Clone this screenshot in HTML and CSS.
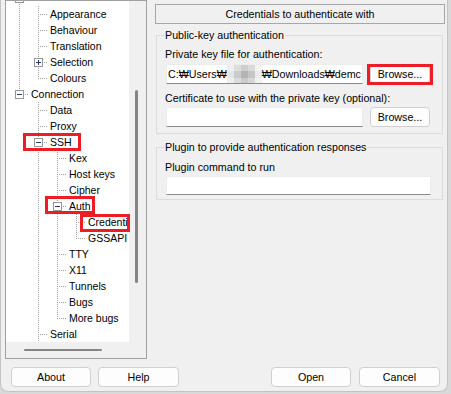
FILE: index.html
```html
<!DOCTYPE html>
<html lang="en">
<head>
    <meta charset="UTF-8">
    <title>PuTTY Configuration - Credentials</title>
    <link rel="stylesheet" href="styles.css">
</head>
<body>
    <div class="window">
        <div class="main">
            <div class="tree-panel">
                <div class="tree-view">
                    <ul class="tree">
                        <!-- "Window" row, scrolled out of view: only its lines show -->
                        <li class="row"><span class="cell t"><span class="exp"></span></span></li>
                        <li class="row"><span class="cell v"></span><span class="cell t"></span><span class="label">Appearance</span></li>
                        <li class="row"><span class="cell v"></span><span class="cell t"></span><span class="label">Behaviour</span></li>
                        <li class="row"><span class="cell v"></span><span class="cell t"></span><span class="label">Translation</span></li>
                        <li class="row"><span class="cell v"></span><span class="cell t"><span class="exp plus"></span></span><span class="label">Selection</span></li>
                        <li class="row"><span class="cell v"></span><span class="cell l"></span><span class="label">Colours</span></li>
                        <li class="row"><span class="cell l"><span class="exp"></span></span><span class="label">Connection</span></li>
                        <li class="row"><span class="cell"></span><span class="cell t"></span><span class="label">Data</span></li>
                        <li class="row"><span class="cell"></span><span class="cell t"></span><span class="label">Proxy</span></li>
                        <li class="row"><span class="cell"></span><span class="cell t"><span class="exp"></span></span><span class="label">SSH</span></li>
                        <li class="row"><span class="cell"></span><span class="cell v"></span><span class="cell t"></span><span class="label">Kex</span></li>
                        <li class="row"><span class="cell"></span><span class="cell v"></span><span class="cell t"></span><span class="label">Host keys</span></li>
                        <li class="row"><span class="cell"></span><span class="cell v"></span><span class="cell t"></span><span class="label">Cipher</span></li>
                        <li class="row"><span class="cell"></span><span class="cell v"></span><span class="cell t"><span class="exp"></span></span><span class="label">Auth</span></li>
                        <li class="row"><span class="cell"></span><span class="cell v"></span><span class="cell v"></span><span class="cell t"></span><span class="label">Credenti</span></li>
                        <li class="row"><span class="cell"></span><span class="cell v"></span><span class="cell v"></span><span class="cell l"></span><span class="label">GSSAPI</span></li>
                        <li class="row"><span class="cell"></span><span class="cell v"></span><span class="cell t"></span><span class="label">TTY</span></li>
                        <li class="row"><span class="cell"></span><span class="cell v"></span><span class="cell t"></span><span class="label">X11</span></li>
                        <li class="row"><span class="cell"></span><span class="cell v"></span><span class="cell t"></span><span class="label">Tunnels</span></li>
                        <li class="row"><span class="cell"></span><span class="cell v"></span><span class="cell t"></span><span class="label">Bugs</span></li>
                        <li class="row"><span class="cell"></span><span class="cell v"></span><span class="cell l"></span><span class="label">More bugs</span></li>
                        <li class="row"><span class="cell"></span><span class="cell t"></span><span class="label">Serial</span></li>
                    </ul>
                </div>
                <div class="vscroll"><div class="thumb-v"></div></div>
                <div class="hscroll"><div class="thumb-h"></div></div>
                <div class="corner"></div>
            </div>

            <div class="settings">
                <div class="panel-title">Credentials to authenticate with</div>

                <div class="group">
                    <div class="group-title">Public-key authentication</div>
                    <div class="field-label">Private key file for authentication:</div>
                    <div class="field-row">
                        <div class="input">C:₩Users₩<span class="blur"></span>₩Downloads₩demc</div>
                        <button type="button" class="btn browse">Browse...</button>
                    </div>
                    <div class="field-label second">Certificate to use with the private key (optional):</div>
                    <div class="field-row tight">
                        <div class="input"></div>
                        <button type="button" class="btn browse">Browse...</button>
                    </div>
                </div>

                <div class="group plugin">
                    <div class="group-title">Plugin to provide authentication responses</div>
                    <div class="field-label">Plugin command to run</div>
                    <div class="field-row tight">
                        <div class="input wide"></div>
                    </div>
                </div>
            </div>
        </div>

        <div class="buttons">
            <button type="button" class="btn about">About</button>
            <button type="button" class="btn help">Help</button>
            <button type="button" class="btn open">Open</button>
            <button type="button" class="btn cancel">Cancel</button>
        </div>

        <!-- red annotation boxes drawn over the dialog -->
        <div class="mark mark-ssh"></div>
        <div class="mark mark-auth"></div>
        <div class="mark mark-cred"></div>
        <div class="mark mark-browse"></div>
    </div>
</body>
</html>
```

FILE: styles.css
```css
* {
    box-sizing: border-box;
    margin: 0;
    padding: 0;
}

body {
    width: 451px;
    height: 394px;
    overflow: hidden;
    background: #d9d9d9;
    font-family: "Liberation Sans", Arial, sans-serif;
    font-size: 10.7px;
    color: #000;
}

.window {
    position: relative;
    width: 448px;
    height: 392px;
    background: #f0f0f0;
    border: 1px solid #c4c4c4;
    border-top: none;
    border-radius: 0 0 8px 8px;
    display: flex;
    flex-direction: column;
}

.main {
    display: flex;
    gap: 8px;
    padding-left: 4px;
}

/* category tree */

.tree-panel {
    width: 142px;
    height: 359px;
    border: 1px solid #a0a0a0;
    display: grid;
    grid-template-columns: 123px 17px;
    grid-template-rows: 341px 16px;
}

.tree-view {
    background: #fff;
    overflow: hidden;
}

.tree {
    list-style: none;
    margin-top: -11px;
    padding-left: 4px;
    font-size: 10.5px;
}

.row {
    display: flex;
    height: 16px;
    line-height: 16px;
    white-space: nowrap;
}

.cell {
    flex: none;
    width: 19px;
    height: 16px;
    display: flex;
    justify-content: center;
    padding-top: 4px;
}

.cell.v {
    background: repeating-linear-gradient(to bottom, #a0a0a0 0 1px, transparent 1px 2px) 9px 0 / 1px 16px no-repeat;
}

.cell.t {
    background:
        repeating-linear-gradient(to right, #a0a0a0 0 1px, transparent 1px 2px) 11px 8px / 8px 1px no-repeat,
        repeating-linear-gradient(to bottom, #a0a0a0 0 1px, transparent 1px 2px) 9px 0 / 1px 16px no-repeat;
}

.cell.l {
    background:
        repeating-linear-gradient(to right, #a0a0a0 0 1px, transparent 1px 2px) 11px 8px / 8px 1px no-repeat,
        repeating-linear-gradient(to bottom, #a0a0a0 0 1px, transparent 1px 2px) 9px 0 / 1px 9px no-repeat;
}

.exp {
    width: 9px;
    height: 9px;
    border: 1px solid #969696;
    background: linear-gradient(#23397a, #23397a) center / 5px 1px no-repeat, #fff;
}

.exp.plus {
    background:
        linear-gradient(#23397a, #23397a) center / 5px 1px no-repeat,
        linear-gradient(#23397a, #23397a) center / 1px 5px no-repeat,
        #fff;
}

.label {
    margin-left: 2px;
}

.vscroll {
    background: #f0f0f0;
    padding: 89px 0 0 6px;
}

.thumb-v {
    width: 3px;
    height: 193px;
    background: #858585;
    border-radius: 2px;
}

.hscroll {
    background: #f0f0f0;
    padding: 7px 0 0 18px;
}

.thumb-h {
    width: 78px;
    height: 2px;
    background: #858585;
    border-radius: 1px;
}

.corner {
    background: #f0f0f0;
}

/* settings panel */

.settings {
    width: 290px;
    padding-top: 4px;
}

.panel-title {
    height: 20px;
    border: 1px solid #a7a7a7;
    text-align: center;
    line-height: 18px;
}

.group {
    margin: 11px 2px 0 1px;
    border: 1px solid #dcdcdc;
    padding: 0 11px 6px 8px;
}

.group.plugin {
    margin-top: 13px;
    padding-bottom: 4px;
}

.group-title {
    width: fit-content;
    margin: -7px 0 0 -1px;
    padding: 0 1px;
    background: #f0f0f0;
    line-height: 13px;
}

.field-label {
    margin-top: 6px;
    line-height: 13px;
}

.field-label.second {
    margin-top: 8px;
}

.plugin .field-label {
    margin-top: 7px;
}

.field-row {
    display: flex;
    gap: 7px;
    margin-top: 3px;
}

.field-row.tight {
    margin-top: 2px;
}

.input {
    width: 197px;
    height: 20px;
    margin-left: 1px;
    padding-left: 1px;
    background: #fff;
    border: 1px solid #ececec;
    border-bottom-color: #8a8a8a;
    display: flex;
    align-items: center;
    overflow: hidden;
    white-space: nowrap;
}

.input.wide {
    width: 265px;
    height: 19px;
}

.blur {
    flex: none;
    width: 35px;
    height: 20px;
    background:
        linear-gradient(to bottom, rgba(255, 255, 255, 0.35) 0 7px, transparent 7px 14px, rgba(255, 255, 255, 0.3) 14px),
        linear-gradient(to right, #e6e6e6 0 7px, #cbcbcb 7px 14px, #b4b4b4 14px 21px, #c6c6c6 21px 28px, #ececec 28px);
}

.btn {
    height: 20px;
    border: 1px solid #d0d0d0;
    border-radius: 4px;
    background: #fdfdfd;
    font-family: inherit;
    font-size: inherit;
    color: #000;
}

.btn.browse {
    width: 60px;
}

/* bottom buttons */

.buttons {
    display: flex;
    margin-top: 8px;
    padding: 0 7px 0 10px;
}

.about {
    width: 80px;
}

.help {
    width: 81px;
    margin-left: 7px;
}

.open {
    width: 80px;
    margin-left: auto;
}

.cancel {
    width: 81px;
    margin-left: 8px;
}

/* annotations */

.mark {
    position: absolute;
    border: 3px solid #ee1c25;
}

.mark-ssh {
    left: 22px;
    top: 133px;
    width: 58px;
    height: 18px;
}

.mark-auth {
    left: 44px;
    top: 196px;
    width: 50px;
    height: 18px;
}

.mark-cred {
    left: 79px;
    top: 214px;
    width: 50px;
    height: 18px;
}

.mark-browse {
    left: 366px;
    top: 64px;
    width: 66px;
    height: 21px;
}
```
